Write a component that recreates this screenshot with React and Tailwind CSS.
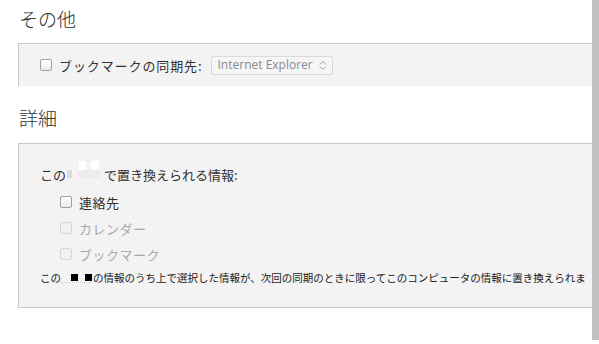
import React from 'react';

const jp = { fontFamily: '"Segoe UI", "Noto Sans CJK JP", sans-serif' };

const Box = ({ disabled }) => (
  <span
    className={`inline-block w-[12px] h-[12px] rounded-[2px] border shrink-0 ${
      disabled ? 'border-[#d6d6d6] bg-[#f0f0f0]' : 'border-[#9e9e9e] bg-gradient-to-b from-[#ffffff] to-[#ececec]'
    }`}
  />
);

const CheckRow = ({ label, disabled }) => (
  <div className="h-[26px] flex items-center gap-[7px] pl-[41px]">
    <Box disabled={disabled} />
    <span className={`text-[13px] leading-none tracking-[0.5px] ${disabled ? 'text-[#a8a8a8]' : 'text-[#303030]'}`}>{label}</span>
  </div>
);

const App = () => {
  return (
    <div className="w-[599px] h-[344px] bg-white flex overflow-hidden" style={jp}>
      <div className="flex-1 min-w-0 pl-[18px]">
        {/* その他 */}
        <div className="h-[43px] pt-[7px] pl-[1px]">
          <h2 className="text-[19px] leading-[24px] font-light text-[#303030]">その他</h2>
        </div>
        <div className="h-[43px] border-t border-l border-[#c8c8c8] bg-[#f3f3f3] flex items-center pl-[21px]">
          <Box />
          <span className="ml-[7px] text-[13px] leading-none tracking-[0.9px] text-[#303030] whitespace-nowrap">ブックマークの同期先:</span>
          <div className="ml-[8px] w-[122px] h-[19px] border border-[#d9d9d9] rounded-[3px] bg-[#f6f6f6] flex items-center justify-between pl-[6px] pr-[5px]">
            <span className="text-[12px] leading-none text-[#8a8a8a] whitespace-nowrap" style={{ fontFamily: '"Open Sans", "Noto Sans", sans-serif' }}>
              Internet Explorer
            </span>
            <svg width="8" height="11" viewBox="0 0 8 11" fill="none" stroke="#9a9a9a" strokeWidth="1">
              <path d="M1 4.5 L4 1.5 L7 4.5" />
              <path d="M1 6.5 L4 9.5 L7 6.5" />
            </svg>
          </div>
        </div>

        {/* 詳細 */}
        <div className="h-[57px] pt-[20px] pl-[1px]">
          <h2 className="text-[19px] leading-[24px] font-light text-[#303030]">詳細</h2>
        </div>
        <div className="h-[165px] border-t border-l border-b border-[#c8c8c8] bg-[#f3f3f3] pt-[22px] overflow-hidden">
          <div className="h-[16px] flex items-center pl-[21px] text-[13px] leading-none text-[#303030] whitespace-nowrap">
            <span>この</span>
            <span className="relative inline-flex items-center w-[38px] h-[14px]">
              <span className="w-[5px] h-[8px] bg-[#dcdcdc] ml-[1px]" />
              <span className="ml-[6px] w-[22px] h-[8px] bg-[#ececec]" />
              <span className="absolute left-[13px] -top-[6px] w-[7px] h-[9px] bg-white" />
              <span className="absolute left-[25px] -top-[6px] w-[8px] h-[9px] bg-white" />
            </span>
            <span>で置き換えられる情報:</span>
          </div>
          <div className="mt-[7px]">
            <CheckRow label="連絡先" />
            <CheckRow label="カレンダー" disabled />
            <CheckRow label="ブックマーク" disabled />
          </div>
          <div className="mt-[3px] h-[16px] flex items-center pl-[21px] text-[10.5px] leading-none text-[#202020] whitespace-nowrap">
            <span>この</span>
            <span className="inline-flex items-center w-[32px] h-[10px] border-b border-dotted border-[#d0d0d0]">
              <span className="ml-[10px] w-[7px] h-[7px] bg-black" />
              <span className="ml-[7px] w-[7px] h-[7px] bg-black" />
            </span>
            <span>の情報のうち上で選択した情報が、次回の同期のときに限ってこのコンピュータの情報に置き換えられま</span>
          </div>
        </div>
      </div>
      <div className="w-[7px] shrink-0">
        <div className="h-[340px] bg-[#c0c0c0]" />
      </div>
    </div>
  );
};

export default App;
